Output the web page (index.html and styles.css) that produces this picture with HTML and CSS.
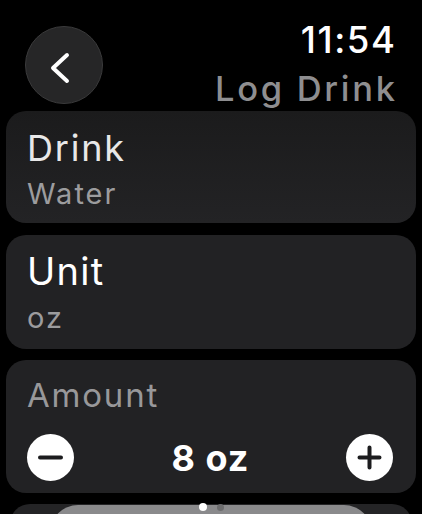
FILE: index.html
```html
<!DOCTYPE html>
<html>
<head>
<meta charset="utf-8">
<link rel="stylesheet" href="styles.css">
</head>
<body>
<div class="screen">
  <header class="header">
    <button class="back" aria-label="Back">
      <svg width="78" height="78" viewBox="0 0 78 78"><path d="M42 29 L28 42 L42 55" fill="none" stroke="#fff" stroke-width="4" stroke-linecap="round" stroke-linejoin="round"/></svg>
    </button>
    <div class="titles">
      <div class="time">11:54</div>
      <div class="title">Log Drink</div>
    </div>
  </header>
  <div class="card card-drink">
    <div class="label">Drink</div>
    <div class="value">Water</div>
  </div>
  <div class="card card-unit">
    <div class="label label-lg">Unit</div>
    <div class="value">oz</div>
  </div>
  <div class="card card-amount">
    <div class="amount-label">Amount</div>
    <div class="stepper">
      <div class="step-btn">
        <svg width="47" height="47" viewBox="0 0 47 47"><path d="M13 23.5 H34" stroke="#1c1c1e" stroke-width="4" stroke-linecap="round"/></svg>
      </div>
      <div class="amount-value">8 oz</div>
      <div class="step-btn">
        <svg width="47" height="47" viewBox="0 0 47 47"><path d="M13.5 23.5 H33.5 M23.5 13.5 V33.5" stroke="#1c1c1e" stroke-width="4" stroke-linecap="round"/></svg>
      </div>
    </div>
  </div>
  <div class="card card-next">
    <div class="next-btn"></div>
  </div>
  <div class="dots">
    <span class="dot active"></span>
    <span class="dot"></span>
  </div>
</div>
</body>
</html>
```

FILE: styles.css
```css
html, body {
  margin: 0;
  padding: 0;
  background: #000;
}
body {
  width: 422px;
  height: 514px;
  overflow: hidden;
  font-family: Inter, "Liberation Sans", sans-serif;
  color: #fff;
}
.screen {
  position: relative;
  width: 422px;
  height: 514px;
  overflow: hidden;
}
.header {
  height: 111px;
  box-sizing: border-box;
  padding: 20px 27px 0 25px;
  display: flex;
  justify-content: space-between;
  align-items: flex-start;
}
.back {
  margin-top: 6px;
  width: 78px;
  height: 78px;
  padding: 0;
  border-radius: 50%;
  background: #262627;
  border: 1.5px solid #3a3a3b;
  box-sizing: border-box;
  display: flex;
  align-items: center;
  justify-content: center;
}
.back svg {
  flex: none;
}
.titles {
  display: flex;
  flex-direction: column;
  align-items: flex-end;
}
.time {
  font-size: 36.5px;
  line-height: 40px;
  font-weight: 500;
  letter-spacing: 1.6px;
  margin-right: -1.6px;
  color: #fff;
}
.title {
  margin-top: 10px;
  font-size: 34.5px;
  line-height: 38px;
  font-weight: 500;
  letter-spacing: 2.7px;
  margin-right: -2.7px;
  color: #8e8e90;
}
.card {
  margin: 0 6px;
  background: #222224;
  border-radius: 20px;
  box-sizing: border-box;
  padding-left: 21px;
}
.card-drink {
  height: 112px;
  padding-top: 17px;
  background: linear-gradient(#1b1b1c, #232325);
}
.card-unit {
  margin-top: 12px;
  height: 114px;
  padding-top: 15px;
}
.card-amount {
  margin-top: 11px;
  height: 133px;
  padding: 16px 23px 0 21px;
}
.card-next {
  margin: 11px 10px 0;
  height: 60px;
  padding: 1px 40px 0;
  background: #242426;
}
.next-btn {
  height: 60px;
  border-radius: 28px;
  background: #8a8a8c;
}
.label {
  font-size: 36px;
  line-height: 40px;
  letter-spacing: 1.8px;
  color: #e8e8e8;
}
.label-lg {
  font-size: 38px;
  line-height: 42px;
  letter-spacing: 1.3px;
  color: #fff;
}
.value {
  margin-top: 9px;
  font-size: 29px;
  line-height: 34px;
  letter-spacing: 2px;
  color: #9c9c9e;
}
.amount-label {
  font-size: 33px;
  line-height: 38px;
  letter-spacing: 1.8px;
  color: #98989a;
}
.stepper {
  margin-top: 20px;
  display: flex;
  align-items: center;
  justify-content: space-between;
}
.step-btn {
  width: 47px;
  height: 47px;
  border-radius: 50%;
  background: #fff;
}
.amount-value {
  font-size: 36px;
  line-height: 40px;
  font-weight: 700;
  letter-spacing: 1px;
  margin-right: -1px;
  color: #fff;
}
.dots {
  position: absolute;
  left: 0;
  right: 0;
  top: 503px;
  display: flex;
  justify-content: center;
  align-items: center;
  gap: 10px;
}
.dot {
  width: 7px;
  height: 7px;
  border-radius: 50%;
  background: #6c6c6e;
}
.dot.active {
  width: 8px;
  height: 8px;
  background: #fff;
}
```
